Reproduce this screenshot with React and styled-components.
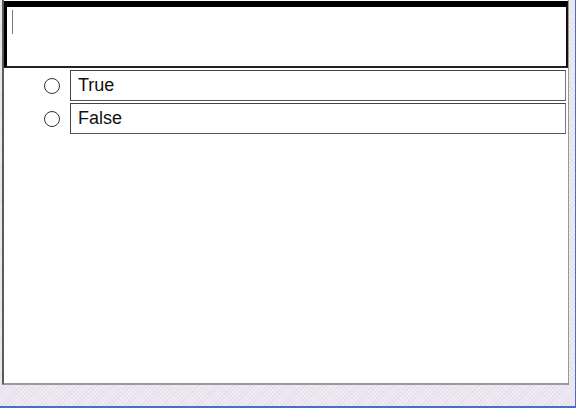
import React from "react";
import styled, { createGlobalStyle } from "styled-components";

const Global = createGlobalStyle`
  html, body { margin: 0; padding: 0; }
  body {
    width: 576px;
    height: 408px;
    overflow: hidden;
    font-family: "Liberation Sans", Arial, sans-serif;
    background-color: #eeedf2;
    background-image:
      repeating-linear-gradient(45deg, rgba(255,200,220,0.35) 0 1px, transparent 1px 3px),
      repeating-linear-gradient(-45deg, rgba(190,210,255,0.35) 0 1px, transparent 1px 3px);
  }
`;

const Screen = styled.div`
  width: 576px;
  height: 408px;
  box-sizing: border-box;
  border-right: 1px solid #4a6fc4;
  border-bottom: 2px solid #4a6fc4;
  padding-left: 2px;
`;

const Page = styled.div`
  width: 567px;
  height: 385px;
  box-sizing: border-box;
  background: #fff;
  border-left: 2px solid #5a5a5a;
  border-right: 1px solid #9a9a9a;
  border-bottom: 2px solid #9a9a9a;
  padding-top: 1px;
  display: flex;
  flex-direction: column;
`;

const Question = styled.div`
  height: 67px;
  box-sizing: border-box;
  border-top: 6px solid #000;
  border-left: 3px solid #000;
  border-right: 2px solid #111;
  border-bottom: 2px solid #222;
  padding: 3px 0 0 5px;
`;

const Cursor = styled.div`
  width: 1px;
  height: 24px;
  background: #777;
`;

const Options = styled.div`
  display: flex;
  flex-direction: column;
  gap: 2px;
  padding: 2px 2px 0 0;
`;

const Row = styled.div`
  display: flex;
  align-items: center;
`;

const Radio = styled.span`
  width: 16px;
  height: 16px;
  box-sizing: border-box;
  border: 1px solid #333;
  border-radius: 50%;
  margin-left: 40px;
  margin-right: 10px;
  flex: none;
`;

const Field = styled.div`
  flex: 1;
  height: 31px;
  box-sizing: border-box;
  border: 1px solid #444;
  border-right-color: #777;
  border-bottom-color: #555;
  padding: 3px 0 0 7px;
  font-size: 18px;
  color: #111;
  line-height: 22px;
`;

export default function App() {
  return (
    <>
      <Global />
      <Screen>
        <Page>
          <Question>
            <Cursor />
          </Question>
          <Options>
            <Row>
              <Radio />
              <Field>True</Field>
            </Row>
            <Row>
              <Radio />
              <Field>False</Field>
            </Row>
          </Options>
        </Page>
      </Screen>
    </>
  );
}
